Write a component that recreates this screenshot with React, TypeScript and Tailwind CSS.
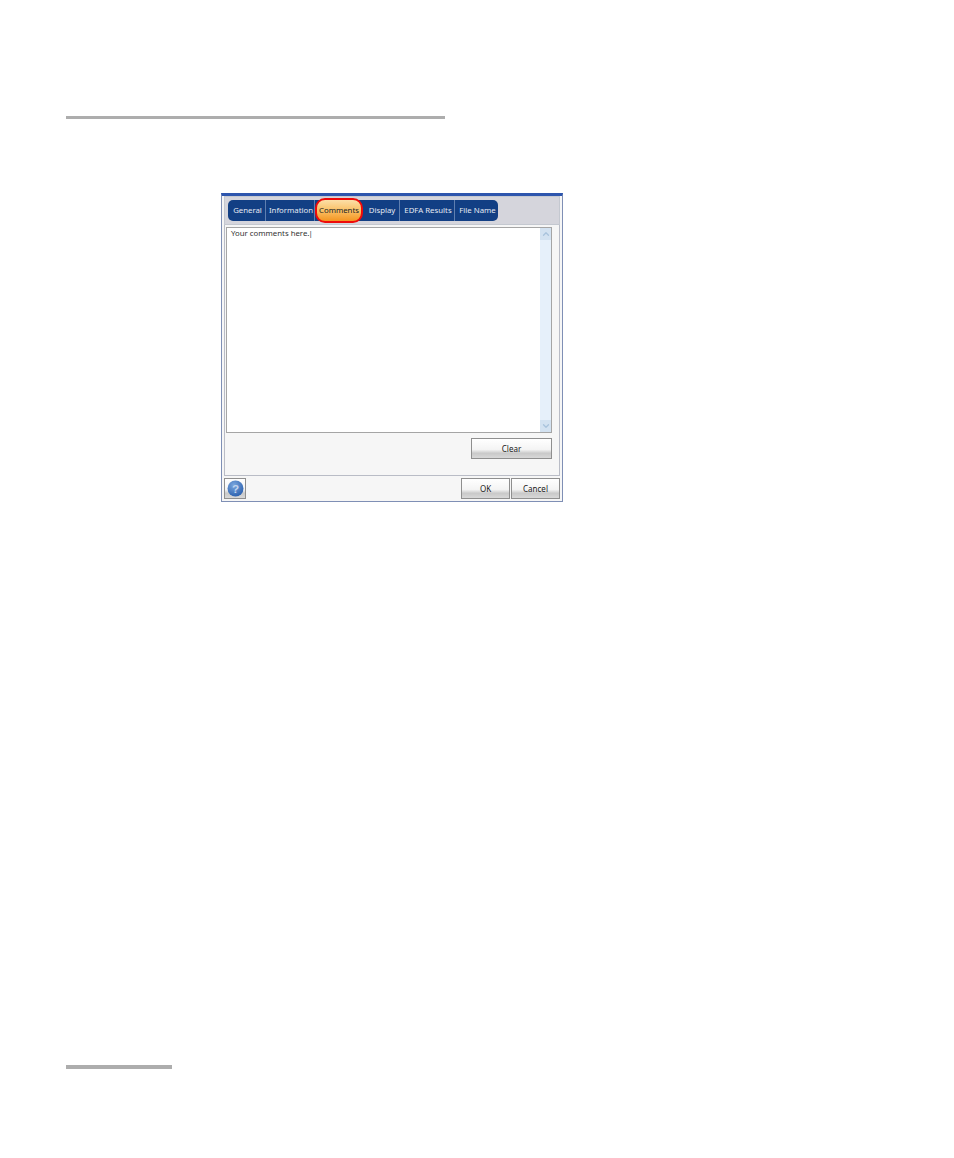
import { ChevronUp, ChevronDown } from "lucide-react";

const TABS = ["General", "Information", "Comments", "Display", "EDFA Results", "File Name"];
const TAB_WIDTHS = [38, 49, 48, 37, 55, 43];

const btn =
  "flex items-center justify-center border border-[#8f8f8f] bg-[linear-gradient(#ffffff_0%,#f4f4f4_55%,#c9c9c9_75%,#d8d8d8_100%)] text-[8px] text-[#1a1a1a]";

function HelpIcon() {
  return (
    <svg width="17" height="17" viewBox="0 0 16 16">
      <defs>
        <radialGradient id="help" cx="40%" cy="30%" r="75%">
          <stop offset="0%" stopColor="#7ba7de" />
          <stop offset="100%" stopColor="#2a5fae" />
        </radialGradient>
      </defs>
      <circle cx="8" cy="8" r="7.5" fill="url(#help)" />
      <text x="8" y="12" textAnchor="middle" fontSize="11" fontWeight="700" fill="#c3d5ee" fontFamily="Liberation Sans, sans-serif">
        ?
      </text>
    </svg>
  );
}

export default function App() {
  return (
    <div className="h-[1158px] w-[954px] overflow-hidden bg-white font-['Noto_Sans',sans-serif]">
      <div className="ml-[66px] mt-[116px] h-[3px] w-[379px] bg-[#adadad]" />

      <div className="ml-[221px] mt-[74px] flex h-[309px] w-[342px] flex-col border border-[#7f8fb5] border-t-[3px] border-t-[#2d55ad] bg-[#f6f6f6] pl-[2px] pr-[2px]">
        <div className="flex h-[29px] items-end border border-[#c4c8d0] bg-[#d5d5dc] pb-[3px] pl-[3px]">
          <div className="flex h-[21px] items-center rounded-[5px] bg-[#123f84]">
            {TABS.map((tab, i) =>
              tab === "Comments" ? (
                <div
                  key={tab}
                  style={{ width: TAB_WIDTHS[i] }}
                  className="z-10 -my-[2px] flex h-[25px] items-center justify-center whitespace-nowrap rounded-[10px] border-2 border-[#ee0a0a] bg-[linear-gradient(#fcdfa8_0%,#fac065_50%,#f39522_100%)] pt-px text-[7.8px] text-[#222]"
                >
                  {tab}
                </div>
              ) : (
                <div
                  key={tab}
                  style={{ width: TAB_WIDTHS[i] }}
                  className="flex h-full items-center justify-center whitespace-nowrap border-r border-[#5f7fb0] pl-[2px] pt-px text-[7.8px] text-[#e4e9f3] last:border-r-0"
                >
                  {tab}
                </div>
              )
            )}
          </div>
        </div>

        <div className="flex h-[251px] flex-col border-b border-x border-[#b9bcc6] pl-[1px] pr-[7px]">
          <div className="mt-[2px] flex h-[206px] border border-[#a5a5a5] bg-white">
            <div className="flex-1 pl-[4px] text-[7.8px] leading-[11px] text-[#333]">
              Your comments here.<span className="-ml-px">|</span>
            </div>
            <div className="flex w-[11px] flex-col bg-[#e6f0fa]">
              <div className="flex h-[12px] items-center justify-center bg-[#d3e2f1] text-[#a9c3dc]">
                <ChevronUp size={10} strokeWidth={3} />
              </div>
              <div className="flex-1" />
              <div className="flex h-[12px] items-center justify-center bg-[#d3e2f1] text-[#a9c3dc]">
                <ChevronDown size={10} strokeWidth={3} />
              </div>
            </div>
          </div>
          <div className="mt-[5px] flex justify-end">
            <button className={`${btn} h-[21px] w-[81px]`}>Clear</button>
          </div>
        </div>

        <div className="mt-[2px] flex items-start justify-between">
          <button className={`${btn} h-[21px] w-[22px]`}>
            <HelpIcon />
          </button>
          <div className="flex gap-px">
            <button className={`${btn} h-[21px] w-[49px]`}>OK</button>
            <button className={`${btn} h-[21px] w-[49px]`}>Cancel</button>
          </div>
        </div>
      </div>

      <div className="ml-[66px] mt-[563px] h-[4px] w-[106px] bg-[#adadad]" />
    </div>
  );
}
